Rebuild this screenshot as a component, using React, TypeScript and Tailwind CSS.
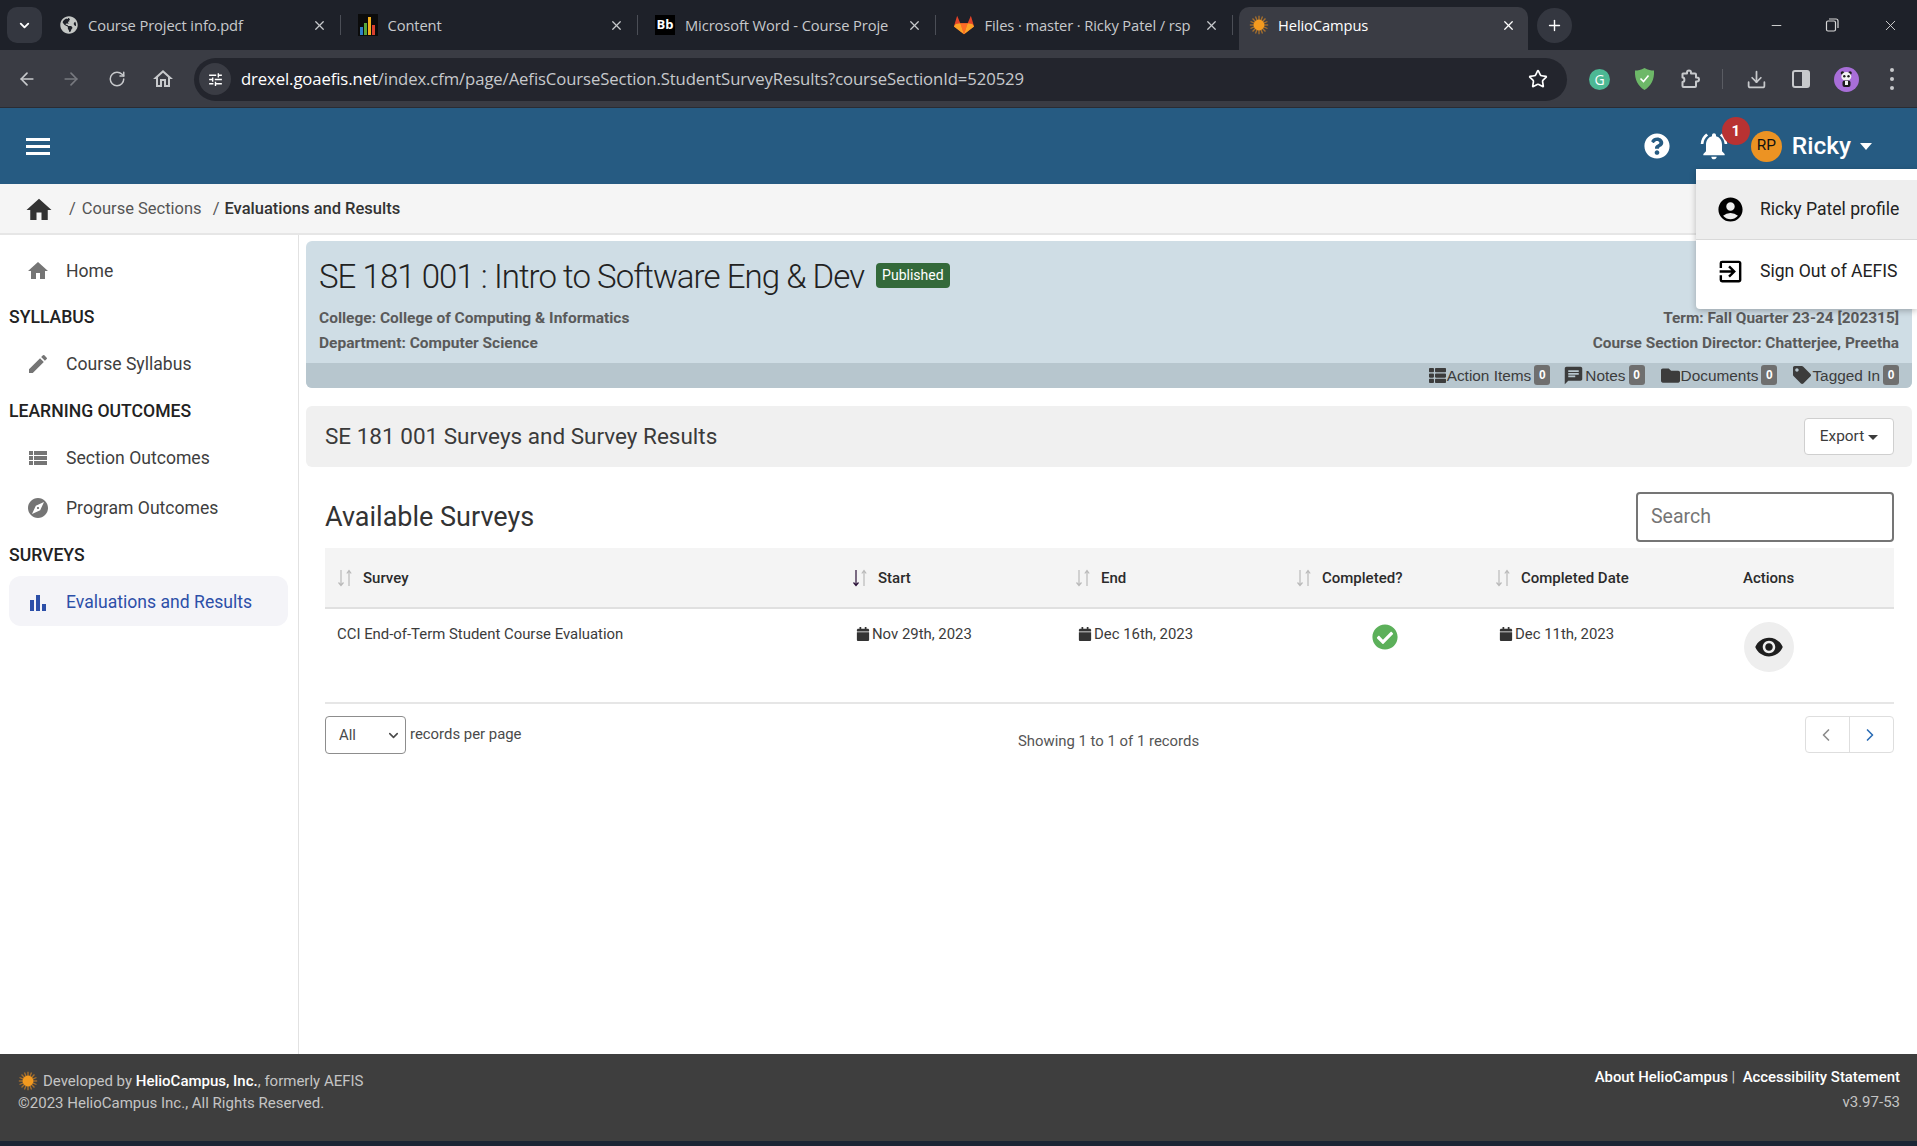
import { ArrowLeft, ArrowRight, RotateCw, Star, Download, Plus, X, ChevronDown, Minus, ChevronLeft, ChevronRight } from 'lucide-react';
import { FaQuestionCircle, FaCalendar, FaCheckCircle, FaGlobeAmericas, FaThList, FaFolder, FaTag } from 'react-icons/fa';
import { MdHome, MdEdit, MdViewList, MdExplore, MdBarChart, MdAccountCircle, MdExitToApp, MdVisibility, MdNotificationsActive, MdTune, MdChat, MdOutlineHome } from 'react-icons/md';

const SunLogo = ({ size = 20 }: { size?: number }) => (
  <svg width={size} height={size} viewBox="0 0 24 24" className="shrink-0">
    {Array.from({ length: 16 }).map((_, i) => (
      <line key={i} x1="12" y1="1" x2="12" y2="6" stroke="#a8702c" strokeWidth="1.6" transform={`rotate(${i * 22.5} 12 12)`} />
    ))}
    <circle cx="12" cy="12" r="6.5" fill="#f39a1f" />
  </svg>
);

const GitlabLogo = () => (
  <svg width="22" height="22" viewBox="0 0 24 24" className="shrink-0">
    <path d="M12 22 L1 13.5 L4.5 2 L8 10 H16 L19.5 2 L23 13.5 Z" fill="#e24329" />
    <path d="M12 22 L8 10 H16 Z" fill="#fc6d26" />
    <path d="M12 22 L1 13.5 L3 11 L8 10 Z" fill="#fca326" />
    <path d="M12 22 L23 13.5 L21 11 L16 10 Z" fill="#fca326" />
  </svg>
);

const BarsLogo = () => (
  <svg width="20" height="22" viewBox="0 0 20 22" className="shrink-0">
    <rect width="20" height="22" fill="#0b0b0b" />
    <rect x="2" y="13" width="3" height="8" fill="#2f80c8" />
    <rect x="6" y="9" width="3" height="12" fill="#57a639" />
    <rect x="10" y="3" width="3" height="18" fill="#f2b01e" />
    <rect x="14" y="11" width="3" height="10" fill="#d9402f" />
  </svg>
);

const SortIcon = ({ active = false }: { active?: boolean }) => (
  <svg width="18" height="18" viewBox="0 0 18 18" className="shrink-0" fill="none" strokeWidth="1.2">
    <path d="M5 1 V16 M2.5 13.5 L5 16.5 L7.5 13.5" stroke={active ? '#2a1038' : '#b9b9b9'} />
    <path d="M13 17 V2 M10.8 4.5 L13 1.5 L15.2 4.5" stroke="#b9b9b9" />
  </svg>
);

const ExtensionIcon = () => (
  <svg width="21" height="21" viewBox="0 0 21 21" fill="none" stroke="currentColor" strokeWidth="2" strokeLinejoin="round">
    <path d="M3 4.5 H7 V3.5 A2 2 0 0 1 11 3.5 V4.5 H15 A1 1 0 0 1 16 5.5 V8.5 H17 A2 2 0 0 1 17 12.5 H16 V17 A1 1 0 0 1 15 18 H3.5 A1 1 0 0 1 2.5 17 V13 C5 13 5 8.5 2.5 8.5 V5 A.5 .5 0 0 1 3 4.5 Z" />
  </svg>
);

const PandaAvatar = () => (
  <svg width="25" height="25" viewBox="0 0 25 25" className="shrink-0">
    <circle cx="12.5" cy="12.5" r="12.5" fill="#a86ed8" />
    <circle cx="8.5" cy="6" r="1.8" fill="#1c1c1c" />
    <circle cx="16" cy="6" r="1.8" fill="#1c1c1c" />
    <ellipse cx="12.3" cy="9.5" rx="5" ry="4.4" fill="#f2f2f2" />
    <circle cx="10.3" cy="9.3" r="1.2" fill="#1c1c1c" />
    <circle cx="14.5" cy="9.3" r="1.2" fill="#1c1c1c" />
    <rect x="8.5" y="13.5" width="8" height="6.5" rx="2" fill="#1c1c1c" />
    <rect x="11" y="14" width="3" height="4" fill="#f2f2f2" />
  </svg>
);

const tabs = [
  { title: 'Course Project info.pdf', icon: <FaGlobeAmericas className="text-[18px] text-[#c4c7c5] shrink-0" /> },
  { title: 'Content', icon: <BarsLogo /> },
  { title: 'Microsoft Word - Course Proje', icon: <span className="w-5 h-5 bg-black text-white text-[13px] font-bold flex items-center justify-center shrink-0">Bb</span> },
  { title: 'Files · master · Ricky Patel / rsp', icon: <GitlabLogo /> },
];

function BrowserChrome() {
  return (
    <div className="font-['Open_Sans',sans-serif]">
      {/* tab strip */}
      <div className="h-[50px] bg-[#1e2129] flex items-center pl-[7px] text-[#c7c9cc]">
        <div className="w-[35px] h-9 rounded-[10px] bg-[#343740] flex items-center justify-center shrink-0 mr-[1px]">
          <ChevronDown size={15} strokeWidth={3} className="text-white" />
        </div>
        {tabs.map((t, i) => (
          <div key={i} className="w-[297.5px] h-[50px] flex items-center shrink-0 pl-[17px] pr-[14px] gap-[10px] relative">
            {t.icon}
            <span className="text-[14.7px] flex-1 overflow-hidden whitespace-nowrap tracking-[-0.1px]">{t.title}</span>
            <X size={15} className="shrink-0" />
            <span className="absolute right-0 top-[15px] h-5 w-px bg-[#4b4e56]" />
          </div>
        ))}
        <div className="w-[289px] h-[43px] mt-[7px] pb-[7px] bg-[#3a3c44] rounded-t-[10px] flex items-center shrink-0 pl-[10px] pr-3 gap-[9px] ml-[6px] text-white">
          <SunLogo />
          <span className="text-[14.7px] flex-1 tracking-[-0.1px]">HelioCampus</span>
          <X size={15} className="shrink-0" />
        </div>
        <div className="w-[35px] h-[35px] rounded-full bg-[#343740] ml-[9px] flex items-center justify-center shrink-0 text-white">
          <Plus size={17} />
        </div>
        <div className="flex-1" />
        <div className="flex items-center pr-[18px] text-[#d8d8d8]">
          <Minus size={15} strokeWidth={1.5} className="mr-[40px]" />
          <svg width="16" height="16" viewBox="0 0 16 16" fill="none" stroke="currentColor" strokeWidth="1.2" className="mr-[42px]"><rect x="2.5" y="4" width="9" height="10" rx="1.5" /><path d="M5 2 H12 A2 2 0 0 1 14 4 V11" /></svg>
          <X size={17} strokeWidth={1.3} />
        </div>
      </div>
      {/* toolbar */}
      <div className="h-[58px] bg-[#3a3c44] border-b border-[#2a2c33] flex items-center pt-[1px] pl-[17px] text-[#c7c9cc]">
        <ArrowLeft size={20} className="mr-[24px]" />
        <ArrowRight size={20} className="mr-[27px] text-[#77797f]" />
        <RotateCw size={18} className="mr-[27px]" />
        <MdOutlineHome size={24} className="mr-[19px] -ml-[2px]" />
        <div className="w-[1373px] h-[43px] rounded-full bg-[#23252d] flex items-center pl-[5px] pr-[19px] shrink-0">
          <div className="w-8 h-8 rounded-full bg-[#3a3c44] flex items-center justify-center mr-[10px] text-white">
            <MdTune size={17} />
          </div>
          <span className="text-[16.7px] flex-1 text-[#c7c9cc] whitespace-nowrap tracking-[-0.1px]">
            <span className="text-white">drexel.goaefis.net</span>/index.cfm/page/AefisCourseSection.StudentSurveyResults?courseSectionId=520529
          </span>
          <Star size={20} className="text-white" strokeWidth={2} />
        </div>
        <div className="flex items-center ml-[22px]">
          <div className="w-[21px] h-[21px] rounded-full bg-[#4cb894] text-white text-[14px] flex items-center justify-center mr-[24px]">G</div>
          <svg width="21" height="24" viewBox="0 0 21 24" className="mr-[25px]"><path d="M10.5 1 C14 3 17 3.5 20 3.5 C20.5 13 17 19 10.5 23 C4 19 .5 13 1 3.5 C4 3.5 7 3 10.5 1 Z" fill="#6db868" /><path d="M6.5 11.5 L9.5 14.5 L14.5 8.5" stroke="#fff" strokeWidth="1.6" fill="none" /></svg>
          <span className="mr-[21px]"><ExtensionIcon /></span>
          <span className="w-px h-[20px] bg-[#5a5c63] mr-[23px]" />
          <Download size={21} className="mr-[24px]" />
          <svg width="20" height="20" viewBox="0 0 20 20" fill="none" className="mr-[23px]"><rect x="2" y="2" width="16" height="16" rx="2" stroke="currentColor" strokeWidth="2" /><rect x="11" y="3" width="6" height="14" fill="currentColor" /></svg>
          <span className="mr-[31px]"><PandaAvatar /></span>
          <span className="flex flex-col gap-[5px]">
            <span className="block w-[4px] h-[4px] rounded-full bg-current" />
            <span className="block w-[4px] h-[4px] rounded-full bg-current" />
            <span className="block w-[4px] h-[4px] rounded-full bg-current" />
          </span>
        </div>
      </div>
    </div>
  );
}

function NavItem({ icon, label, active = false }: { icon: React.ReactNode; label: string; active?: boolean }) {
  return (
    <div className={`h-[50px] flex items-center rounded-xl ${active ? 'ml-[9px] pl-[17px] pt-[3px] bg-[#f4f4f8] text-[#2c4fa8]' : 'pl-[26px] text-[#3e3e3e]'}`}>
      <span className={`w-[24px] flex justify-center text-[28px] mr-[16px] ${active ? 'text-[#2c4fa8]' : 'text-[#757575]'}`}>{icon}</span>
      <span className="text-[17.6px]">{label}</span>
    </div>
  );
}

const NavHeading = ({ children }: { children: React.ReactNode }) => (
  <div className="text-[17.6px] text-[#222] font-medium leading-6 pl-[9px]">{children}</div>
);

function Counter({ icon, label, tight = false }: { icon: React.ReactNode; label: string; tight?: boolean }) {
  return (
    <span className={`flex items-center font-['Liberation_Sans',sans-serif] text-[15.4px] text-[#3c3c3c] ${tight ? 'ml-[13px]' : 'ml-[16px]'}`}>
      <span className="text-[#3c3c3c] mr-[1px] flex items-center">{icon}</span>
      {label}
      <span className="ml-[3px] w-4 h-5 rounded-[3px] bg-[#6f6f6f] text-white text-[12px] font-bold flex items-center justify-center">0</span>
    </span>
  );
}

const DateCell = ({ value }: { value: string }) => (
  <span className="flex items-center text-[14.9px] text-[#3b3b3b]">
    <FaCalendar className="text-[14px] text-[#333] mr-[2px] shrink-0" />
    {value}
  </span>
);

const HeadCell = ({ label, active = false }: { label: string; active?: boolean }) => (
  <div className="flex items-center gap-[9px] pl-[11px] font-medium text-[15px] text-[#2b2b2b]">
    <SortIcon active={active} />
    {label}
  </div>
);

export default function App() {
  return (
    <div className="h-[1146px] w-[1917px] overflow-hidden relative flex flex-col bg-white font-['Roboto',sans-serif]">
      <BrowserChrome />

      <header className="h-[76px] shrink-0 bg-[#265b82] flex items-center pl-[26px] text-white">
        <div className="flex flex-col gap-[4px]">
          <span className="block w-6 h-[3px] bg-white" />
          <span className="block w-6 h-[3px] bg-white" />
          <span className="block w-6 h-[3px] bg-white" />
        </div>
        <div className="flex-1" />
        <FaQuestionCircle className="text-[26px] mr-[28px]" />
        <div className="relative mr-[21px]">
          <MdNotificationsActive className="text-[32px]" />
          <span className="absolute -top-[13px] left-[24px] w-7 h-7 rounded-full bg-[#b83232] text-[15px] font-bold flex items-center justify-center">1</span>
        </div>
        <span className="w-[31px] h-[31px] rounded-full bg-[#ec9323] text-[#111] text-[15.4px] flex items-center justify-center mr-[10px]">RP</span>
        <span className="text-[24.5px] font-medium">Ricky</span>
        <span className="ml-[9px] mr-[45px] w-0 h-0 border-x-[6px] border-x-transparent border-t-[7px] border-t-white" />
      </header>

      <nav className="h-[51px] shrink-0 bg-[#f5f5f5] border-b-2 border-[#e6e6e6] flex items-center pt-[2px] pl-[24px] text-[16.5px]">
        <MdHome className="text-[30px] text-[#333] mr-[15px]" />
        <span className="text-[#555] mr-[6px]">/</span>
        <span className="text-[#555]">Course Sections</span>
        <span className="text-[#555] ml-[11px] mr-[5px]">/</span>
        <span className="text-[#333] font-medium">Evaluations and Results</span>
      </nav>

      <div className="flex-1 flex min-h-0">
        <aside className="w-[299px] shrink-0 border-r border-[#e2e2e2] pr-[10px] pt-[11px]">
          <NavItem icon={<MdHome />} label="Home" />
          <div className="mt-[9px] mb-[10px]"><NavHeading>SYLLABUS</NavHeading></div>
          <NavItem icon={<MdEdit />} label="Course Syllabus" />
          <div className="mt-[10px] mb-[10px]"><NavHeading>LEARNING OUTCOMES</NavHeading></div>
          <NavItem icon={<MdViewList />} label="Section Outcomes" />
          <NavItem icon={<MdExplore />} label="Program Outcomes" />
          <div className="mt-[10px] mb-[9px]"><NavHeading>SURVEYS</NavHeading></div>
          <NavItem icon={<MdBarChart />} label="Evaluations and Results" active />
        </aside>

        <main className="flex-1 min-w-0 pl-[7px] pr-[5px] pt-[6px]">
          <section className="bg-[#cfdde5] rounded-md overflow-hidden">
            <div className="h-[122px] px-[13px] pt-[16px]">
              <div className="flex items-center">
                <h1 className="text-[33px] leading-[40px] font-light text-[#222] tracking-[-0.95px]">SE 181 001 : Intro to Software Eng &amp; Dev</h1>
                <span className="ml-3 mb-[3px] h-[25px] px-[6px] rounded bg-[#33693a] text-white text-[14px] flex items-center">Published</span>
              </div>
              <div className="flex justify-between mt-[9px] font-bold text-[#5a5a5a] leading-[25px]">
                <div className="text-[15.5px]">
                  <div>College: College of Computing &amp; Informatics</div>
                  <div>Department: Computer Science</div>
                </div>
                <div className="text-right text-[15.4px]">
                  <div>Term: Fall Quarter 23-24 [202315]</div>
                  <div>Course Section Director: Chatterjee, Preetha</div>
                </div>
              </div>
            </div>
            <div className="h-[25px] bg-[#b7c6ce] flex items-center justify-end pr-[13px]">
              <Counter icon={<FaThList className="text-[17px]" />} label="Action Items" />
              <Counter icon={<MdChat className="text-[21px]" />} label="Notes" tight />
              <Counter icon={<FaFolder className="text-[19px]" />} label="Documents" />
              <Counter icon={<FaTag className="text-[18px]" />} label="Tagged In" />
            </div>
          </section>

          <section className="mt-[18px] h-[61px] bg-[#f0f0f0] rounded-md flex items-center justify-between pl-[19px] pr-[18px]">
            <h2 className="text-[22.5px] text-[#3a3a3a]">SE 181 001 Surveys and Survey Results</h2>
            <button className="w-[90px] h-[37px] pt-[1px] bg-white border border-[#cfcfcf] rounded text-[15.4px] text-[#3c3c3c] flex items-center justify-center gap-1">
              Export
              <span className="w-0 h-0 border-x-[5px] border-x-transparent border-t-[5px] border-t-[#3c3c3c]" />
            </button>
          </section>

          <div className="ml-[19px] mr-[18px]">
            <div className="mt-[25px] flex items-center justify-between">
              <h2 className="text-[27px] text-[#333]">Available Surveys</h2>
              <div className="w-[258px] h-[50px] border-2 border-[#757575] rounded flex items-center pl-[13px] text-[19.5px] text-[#757575]">Search</div>
            </div>

            <div className="mt-[6px] h-[61px] bg-[#f4f4f4] border-b-2 border-[#e0e0e0] grid grid-cols-[515px_223px_221px_199px_241px_1fr] items-center pt-[1px]">
              <HeadCell label="Survey" />
              <HeadCell label="Start" active />
              <HeadCell label="End" />
              <HeadCell label="Completed?" />
              <HeadCell label="Completed Date" />
              <div className="font-medium text-[15px] text-[#2b2b2b] pl-[19px]">Actions</div>
            </div>

            <div className="h-[95px] border-b-2 border-[#e6e6e6] grid grid-cols-[515px_223px_221px_199px_241px_1fr] text-[14.9px] text-[#3b3b3b]">
              <div className="pl-[12px] pt-[14px]">CCI End-of-Term Student Course Evaluation</div>
              <div className="pl-[16px] pt-[14px]"><DateCell value="Nov 29th, 2023" /></div>
              <div className="pl-[15px] pt-[14px]"><DateCell value="Dec 16th, 2023" /></div>
              <div className="pl-[88px] pt-[15px]"><FaCheckCircle className="text-[26px] text-[#5cb05a]" /></div>
              <div className="pl-[16px] pt-[14px]"><DateCell value="Dec 11th, 2023" /></div>
              <div className="pt-[13px] pl-[20px]">
                <div className="w-[50px] h-[50px] rounded-full bg-[#eeeeee] flex items-center justify-center">
                  <MdVisibility className="text-[30px] text-[#1e1e1e]" />
                </div>
              </div>
            </div>

            <div className="mt-[12px] grid grid-cols-3 items-start">
              <div className="flex items-start text-[14.9px] text-[#4a4a4a]">
                <div className="w-[81px] h-[38px] border border-[#8d8d8d] rounded flex items-center justify-between pl-[13px] pr-[4px] text-[#4a4a4a]">
                  All
                  <ChevronDown size={15} strokeWidth={2.5} />
                </div>
                <span className="ml-[4px] mt-[7px]">records per page</span>
              </div>
              <div className="text-center text-[14.9px] text-[#555] pt-[14px] -ml-[2px]">Showing 1 to 1 of 1 records</div>
              <div className="flex justify-end">
                <div className="w-[89px] h-[37px] border border-[#dedede] rounded flex">
                  <span className="flex-1 border-r border-[#dedede] flex items-center justify-center pr-[4px] text-[#8b8b8b]"><ChevronLeft size={20} /></span>
                  <span className="flex-1 flex items-center justify-center pr-[4px] text-[#2c6db5]"><ChevronRight size={20} /></span>
                </div>
              </div>
            </div>
          </div>
        </main>
      </div>

      <footer className="h-[92px] shrink-0 bg-[#3e3e3e] border-b-[5px] border-[#1b2434] pl-[18px] pr-[17px] pt-[16px] flex justify-between text-[15px] leading-[22px] text-[#c4c4c4]">
        <div>
          <div className="flex items-center gap-[5px]">
            <SunLogo size={20} />
            <span>Developed by <span className="text-white font-medium">HelioCampus, Inc.</span>, formerly AEFIS</span>
          </div>
          <div>©2023 HelioCampus Inc., All Rights Reserved.</div>
        </div>
        <div className="text-right -mt-[4px]">
          <div className="text-white font-medium text-[14.9px]">About HelioCampus <span className="font-normal text-[#c4c4c4]">|</span>&nbsp; Accessibility Statement</div>
          <div className="text-[#c4c4c4] mt-[3px]">v3.97-53</div>
        </div>
      </footer>

      {/* profile dropdown */}
      <div className="absolute left-[1696px] top-[169px] w-[221px] h-[140px] bg-white rounded-bl shadow-[0_2px_6px_rgba(0,0,0,0.25)] pt-[11px] text-[17.6px] text-[#222]">
        <div className="h-[60px] bg-[#eeeeee] border-b border-[#d9d9d9] flex items-center pl-[20px] gap-[15px] whitespace-nowrap">
          <MdAccountCircle className="text-[29px] text-black shrink-0" />
          Ricky Patel profile
        </div>
        <div className="h-[62px] flex items-center pl-[20px] gap-[15px] whitespace-nowrap">
          <MdExitToApp className="text-[29px] text-black shrink-0" />
          Sign Out of AEFIS
        </div>
      </div>
    </div>
  );
}
